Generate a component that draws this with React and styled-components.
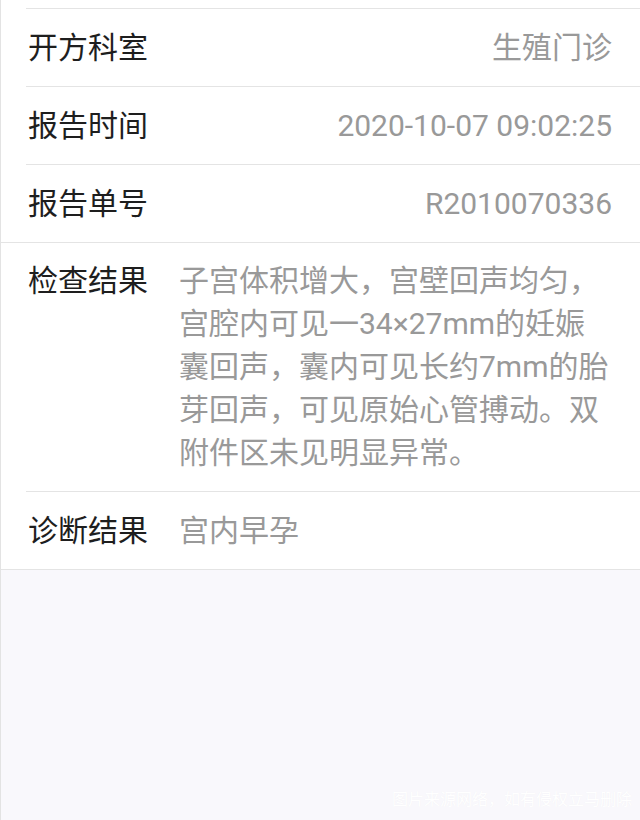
import React from 'react';
import styled, { createGlobalStyle } from 'styled-components';

const GlobalStyle = createGlobalStyle`
  html, body {
    margin: 0;
    padding: 0;
    background: #f9f8fc;
  }
  body {
    font-family: Roboto, 'Noto Sans CJK SC', sans-serif;
  }
  * {
    box-sizing: border-box;
  }
`;

const Page = styled.div`
  min-height: 820px;
  display: flex;
  flex-direction: column;
  border-left: 1px solid #e3e3e3;
`;

const Card = styled.div`
  background: #fff;
  padding-top: 8px;
`;

const Group = styled.div`
  border-bottom: 1px solid #e4e4e4;
`;

const Row = styled.div`
  display: grid;
  grid-template-columns: 151px 1fr;
  align-items: ${p => (p.$multi ? 'start' : 'center')};
  min-height: 78px;
  margin-left: 25px;
  padding: ${p => (p.$multi ? '16px 28px 17px 2px' : '0 28px 0 2px')};
  border-top: ${p => (p.$first ? 'none' : '1px solid #e4e4e4')};
  font-size: 30px;
`;

const Label = styled.div`
  color: #1e1e1e;
  line-height: 43px;
  white-space: nowrap;
`;

const Value = styled.div`
  color: #999;
  line-height: 43px;
  text-align: ${p => (p.$right ? 'right' : 'left')};
`;

const Filler = styled.div`
  flex: 1;
`;

const Watermark = styled.div`
  align-self: flex-end;
  padding: 0 8px 10px 0;
  font-size: 16px;
  line-height: 20px;
  color: #ffffff;
  text-shadow: 0 0 1px rgba(0, 0, 0, 0.04);
`;

const infoRows = [
  { label: '开方科室', value: '生殖门诊' },
  { label: '报告时间', value: '2020-10-07 09:02:25' },
  { label: '报告单号', value: 'R2010070336' },
];

const App = () => (
  <>
    <GlobalStyle />
    <Page>
      <Card>
        <Group>
          {infoRows.map(r => (
            <Row key={r.label}>
              <Label>{r.label}</Label>
              <Value $right>{r.value}</Value>
            </Row>
          ))}
        </Group>
        <Group>
          <Row $first $multi>
            <Label>检查结果</Label>
            <Value>
              子宫体积增大，宫壁回声均匀，宫腔内可见一34×27mm的妊娠囊回声，囊内可见长约7mm的胎芽回声，可见原始心管搏动。双附件区未见明显异常。
            </Value>
          </Row>
          <Row>
            <Label>诊断结果</Label>
            <Value>宫内早孕</Value>
          </Row>
        </Group>
      </Card>
      <Filler />
      <Watermark>图片来源网络，如有侵权立马删除</Watermark>
    </Page>
  </>
);

export default App;
